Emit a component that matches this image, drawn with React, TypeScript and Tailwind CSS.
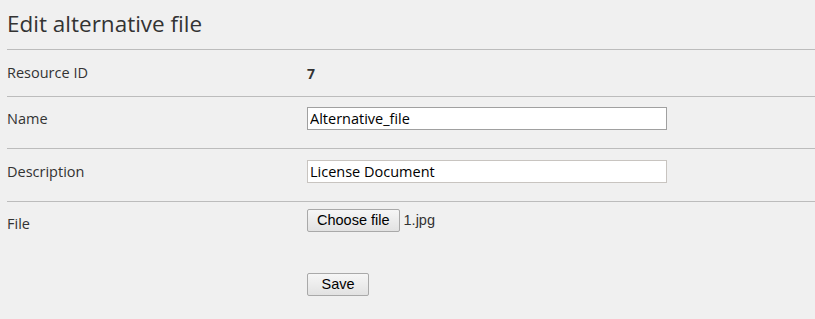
import React from 'react';

const sans = "font-['Open_Sans','Noto_Sans',sans-serif]";
const btn =
    "h-[23px] px-[9px] rounded-[2px] border border-[#a9a9a9] bg-gradient-to-b from-[#f6f6f6] to-[#e2e2e2] text-[14.5px] text-black font-['Liberation_Sans',Arial,sans-serif] leading-none";

const Row: React.FC<{ label: string; className: string; labelClass?: string; children: React.ReactNode }> = ({
    label,
    className,
    labelClass = '',
    children,
}) => (
    <div className={`flex items-center border-b border-[#bcbcbc] ${className}`}>
        <div className={`w-[300px] shrink-0 text-[14.5px] text-[#333] ${labelClass}`}>{label}</div>
        <div className="flex items-center">{children}</div>
    </div>
);

const App: React.FC = () => {
    return (
        <div className={`min-h-[319px] w-[815px] bg-[#f0f0f0] pl-[7px] ${sans}`}>
            <h1 className="pt-[9px] pb-[10px] text-[22.5px] leading-[30px] text-[#333] border-b border-[#bcbcbc]">
                Edit alternative file
            </h1>
            <Row label="Resource ID" className="h-[47px]">
                <span className="text-[14px] font-bold text-[#333]">7</span>
            </Row>
            <Row label="Name" className="h-[52px] pb-[9px]" labelClass="pt-[2px]">
                <input
                    readOnly
                    value="Alternative_file"
                    className="w-[360px] h-[23px] px-[2px] bg-white border border-[#a0a0a0] text-[14.5px] text-black outline-none"
                />
            </Row>
            <Row label="Description" className="h-[53px] pb-[8px]" labelClass="pt-[2px]">
                <input
                    readOnly
                    value="License Document"
                    className="w-[360px] h-[23px] px-[2px] bg-white border border-[#c8c4c0] text-[14.5px] text-black outline-none"
                />
            </Row>
            <div className="flex pt-[7px]">
                <div className="w-[300px] shrink-0 pt-[5px] text-[14.5px] leading-[20px] text-[#333]">File</div>
                <div className="flex flex-col items-start">
                    <div className="flex items-center gap-[4px]">
                        <button className={btn}>Choose file</button>
                        <span className="text-[14.5px] text-[#333] font-['Liberation_Sans',Arial,sans-serif]">1.jpg</span>
                    </div>
                    <button className={`${btn} mt-[41px] w-[62px]`}>Save</button>
                </div>
            </div>
        </div>
    );
};

export default App;
